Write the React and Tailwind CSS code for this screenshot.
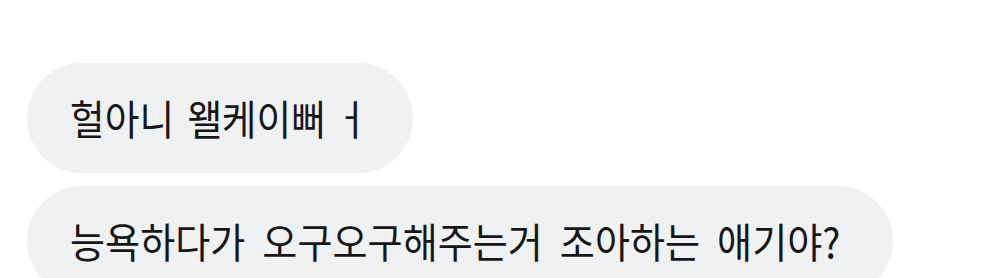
export default function App() {
  const font = { fontFamily: '"Noto Sans CJK KR", "Noto Sans", sans-serif' };
  return (
    <div className="w-[998px] h-[278px] bg-white overflow-hidden pt-[63px] pl-[27px] flex flex-col gap-[13px]" style={font}>
      <div className="self-start shrink-0 h-[110px] w-[386px] rounded-[55px] bg-[#eff1f2] pl-[43px] flex items-center">
        <span className="inline-block whitespace-nowrap text-[41px] leading-none text-[#161616] scale-x-[0.92] origin-left -mt-[2px] [word-spacing:5px]">
          헐아니 왤케이뻐<span className="[word-spacing:0px]"> ㅓ</span>
        </span>
      </div>
      <div className="self-start shrink-0 h-[110px] w-[866px] rounded-[55px] bg-[#eff1f2] pl-[43px] flex items-center">
        <span className="inline-block whitespace-nowrap text-[41px] leading-none text-[#161616] scale-x-[0.93] origin-left -mt-[2px] [word-spacing:9px]">능욕하다가 오구오구해주는거 조아하는 애기야?</span>
      </div>
    </div>
  );
}
